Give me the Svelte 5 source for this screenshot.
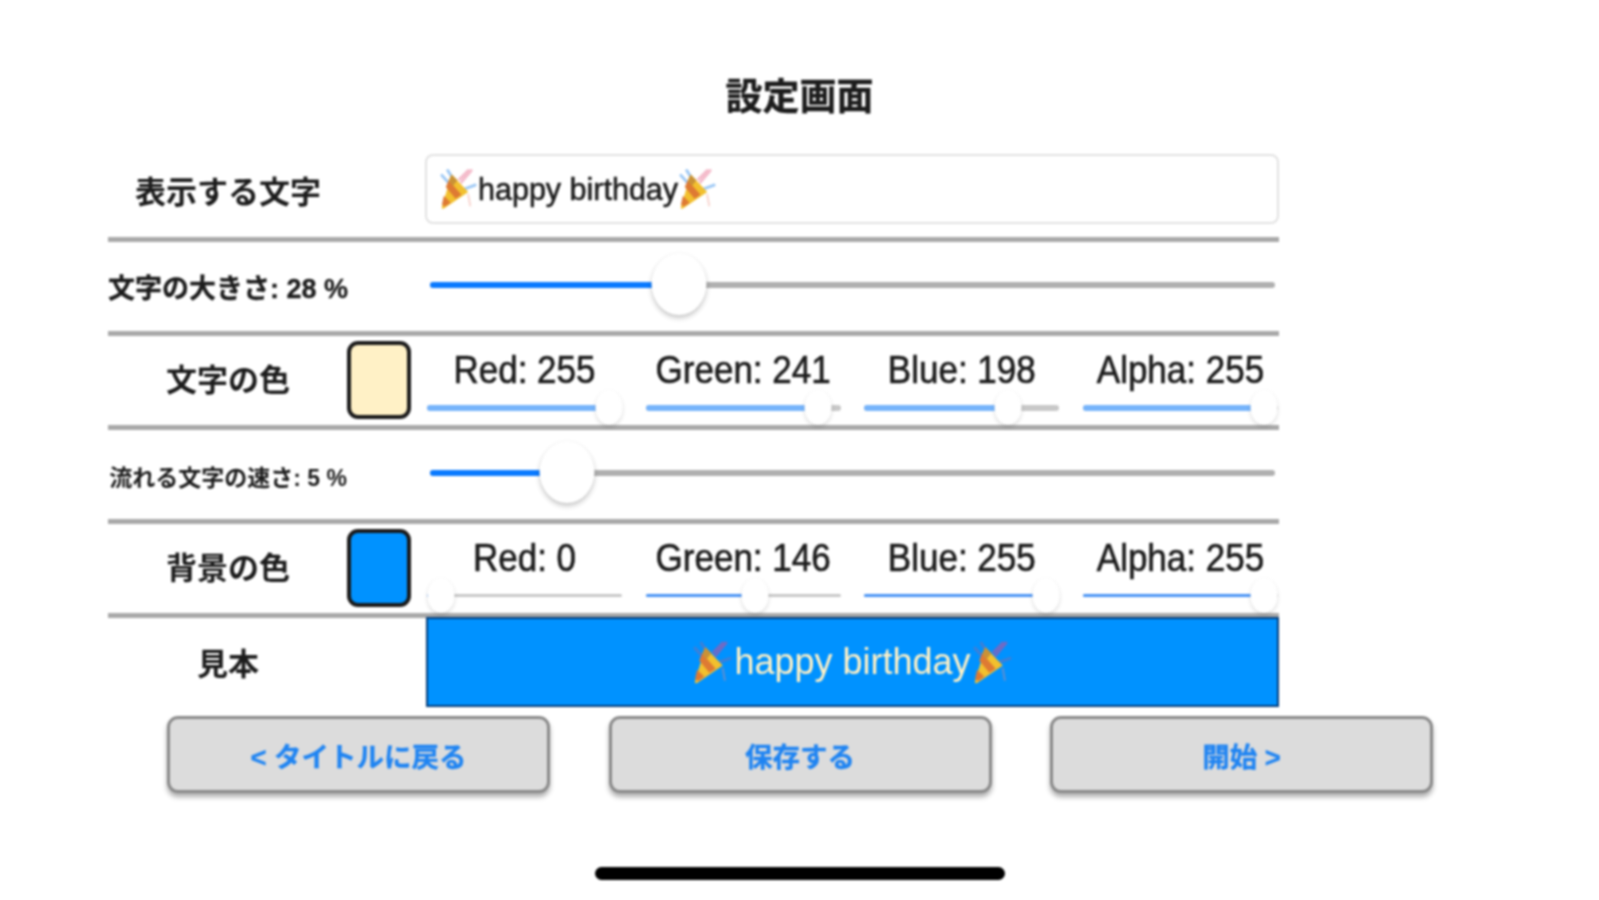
<script>
	let message = $state("happy birthday");
	let textSize = $state(28);
	let speed = $state(5);

	let textColor = $state([
		{ name: "Red", value: 255 },
		{ name: "Green", value: 241 },
		{ name: "Blue", value: 198 },
		{ name: "Alpha", value: 255 }
	]);
	let bgColor = $state([
		{ name: "Red", value: 0 },
		{ name: "Green", value: 146 },
		{ name: "Blue", value: 255 },
		{ name: "Alpha", value: 255 }
	]);

	const toCss = (c) => `rgb(${c[0].value}, ${c[1].value}, ${c[2].value})`;

	// thumb stays inside the track, like the native slider
	function thumbPos(value, max, thumb) {
		return `calc(${thumb / 2}px + (100% - ${thumb}px) * ${value / max})`;
	}
</script>

{#snippet popper()}
	<svg class="popper" viewBox="0 0 40 44" aria-hidden="true">
		<path class="streamer-a" d="M9 3l7 11M3 8l8 9" stroke-width="3" stroke-linecap="round" fill="none" />
		<path class="streamer-b" d="M23 15L33 3M30 3l-9 9" stroke-width="3" stroke-linecap="round" fill="none" />
		<path class="streamer-a" d="M26 22l11-4" stroke-width="3" stroke-linecap="round" />
		<path class="streamer-c" d="M30 28l2 11" stroke-width="2" stroke-linecap="round" />
		<path d="M13 7L30 25 5 42q-3 1-2-2z" fill="#f2c02e" />
		<path d="M10 13l13 15-6 4L7 20zM5 29l7 7-6 4-3-2z" fill="#de7a33" />
		<path d="M13 7l6 6-5 6-4-6z" fill="#c99235" />
	</svg>
{/snippet}

{#snippet slider(value, max, thumb, big)}
	<div class="slider" class:big style="--pos: {thumbPos(value, max, thumb)}">
		<div class="track"></div>
		<div class="fill"></div>
		<div class="thumb"></div>
	</div>
{/snippet}

{#snippet colorRow(label, color, thin)}
	<div class="row" class:thin>
		<span class="label color">{label}</span>
		<div class="swatch" style="background: {toCss(color)}"></div>
		<div class="channels">
			{#each color as ch}
				<div class="channel">
					<span class="channel-name">{ch.name}: {ch.value}</span>
					{@render slider(ch.value, 255, 27, false)}
				</div>
			{/each}
		</div>
	</div>
{/snippet}

<div class="screen">
	<h1>設定画面</h1>

	<div class="form">
		<div class="row first">
			<span class="label">表示する文字</span>
			<div class="input">{@render popper()}<span>{message}</span>{@render popper()}</div>
		</div>
		<div class="row">
			<span class="label small">文字の大きさ: {textSize} %</span>
			{@render slider(textSize, 100, 55, true)}
		</div>
		{@render colorRow("文字の色", textColor, false)}
		<div class="row">
			<span class="label tiny">流れる文字の速さ: {speed} %</span>
			{@render slider(speed, 36, 55, true)}
		</div>
		{@render colorRow("背景の色", bgColor, true)}
		<div class="row sample">
			<span class="label">見本</span>
			<div class="preview" style="background: {toCss(bgColor)}; color: {toCss(textColor)}">
				{@render popper()}<span>{message}</span>{@render popper()}
			</div>
		</div>
	</div>

	<div class="buttons">
		<button>&lt; タイトルに戻る</button>
		<button>保存する</button>
		<button>開始 &gt;</button>
	</div>

	<div class="home-bar"></div>
</div>

<style>
	:global(body) { background: #fff; }

	.screen {
		height: 900px;
		overflow: hidden;
		font-family: "Liberation Sans", "Noto Sans CJK JP", sans-serif;
		color: #1c1c1c;
		filter: blur(1.1px);
	}

	h1 {
		margin: 0;
		padding-top: 72px;
		height: 73px;
		line-height: 52px;
		font-size: 37px;
		font-weight: 700;
		text-align: center;
		-webkit-text-stroke: 0.4px #1c1c1c;
	}

	.form { width: 1171px; margin-left: 108px; }

	.row {
		display: grid;
		grid-template-columns: 240px 77px 1fr;
		align-items: center;
		height: 94px;
		box-sizing: border-box;
		border-bottom: 5px solid #a9a9a9;
	}
	.row.first { height: 97px; }
	.row > .slider { grid-column: 3; margin: -3px 4px 0 5px; }

	.label {
		text-align: center;
		font-size: 31px;
		font-weight: 700;
		white-space: nowrap;
		margin-top: -4px;
	}
	.label.color { margin-top: -7px; }
	.label.small { font-size: 27px; margin-top: 0; -webkit-text-stroke: 0.3px #1c1c1c; }
	.label.tiny { font-size: 23px; margin-top: 2px; }

	.input {
		grid-column: 2 / 4;
		margin-left: 77px;
		height: 70px;
		box-sizing: border-box;
		border: 2px solid #e2e2e2;
		border-radius: 8px;
		padding: 0 12px;
		display: flex;
		align-items: center;
		font-size: 30.5px;
		margin-bottom: 4px;
		-webkit-text-stroke: 0.6px #1c1c1c;
	}

	.popper { width: 39px; height: 44px; flex: none; }
	.streamer-a { stroke: #9cc8f5; }
	.streamer-b { stroke: #f4bccb; }
	.streamer-c { stroke: #f8d5cf; }
	.preview .streamer-a { stroke: #3f7fd6; }
	.preview .streamer-b { stroke: #6f6bc4; }
	.preview .streamer-c { stroke: #5c8ed0; }

	.slider { position: relative; height: 62px; }
	.slider .track,
	.slider .fill {
		position: absolute;
		left: 0;
		top: 50%;
		height: 6px;
		margin-top: -3px;
		background: #b0b0b0;
		border-radius: 3px;
	}
	.slider .track { right: 0; }
	.slider .fill { width: var(--pos); background: #0a7aff; }
	.slider .thumb {
		position: absolute;
		left: var(--pos);
		top: 0;
		width: 27px;
		height: 35px;
		transform: translateX(-50%);
		background: #fff;
		border-radius: 50%;
		box-shadow: 0 2px 4px rgba(0, 0, 0, 0.14);
	}
	.slider.big .thumb {
		width: 55px;
		height: 62px;
		top: -1px;
		box-shadow: 0 3px 5px rgba(0, 0, 0, 0.22), 0 0 1px rgba(0, 0, 0, 0.1);
	}
	.slider:not(.big) { height: 35px; }
	.slider:not(.big) .fill { background: #76b4fb; }
	.slider:not(.big) .track { background: #c8c8c8; }
	.thin .slider .track,
	.thin .slider .fill { height: 3.5px; margin-top: -1.75px; }
	.thin .slider:not(.big) .fill { background: #4a94f5; }

	.swatch {
		width: 64px;
		height: 78px;
		margin-left: -1px;
		margin-top: -2px;
		box-sizing: border-box;
		border: 4px solid #1a1a1a;
		border-radius: 11px;
	}

	.channels {
		display: flex;
		justify-content: space-between;
		padding: 0 1px 0 2px;
		align-self: end;
	}
	.channel { width: 195px; text-align: center; }
	.channel-name {
		display: block;
		height: 44px;
		line-height: 46px;
		font-size: 35px;
		white-space: nowrap;
		transform: scaleY(1.12);
		-webkit-text-stroke: 0.6px #1c1c1c;
	}

	.sample { height: 90px; border-bottom: none; }
	.preview {
		grid-column: 2 / 4;
		margin: -2px 0 0 78px;
		height: 90px;
		box-sizing: border-box;
		border: 2px solid #063f7c;
		display: flex;
		align-items: center;
		justify-content: center;
		gap: 1px;
		font-size: 36px;
	}
	.preview .popper { width: 41px; height: 49px; }

	.buttons {
		display: flex;
		justify-content: space-between;
		margin: 8px 166px 0 167px;
	}
	button {
		width: 383px;
		height: 77px;
		box-sizing: border-box;
		background: #dcdcdc;
		border: 3px solid #8a8a8a;
		border-radius: 11px;
		box-shadow: 0 4px 5px rgba(0, 0, 0, 0.32);
		color: #1f84f2;
		font: 700 27.5px "Liberation Sans", "Noto Sans CJK JP", sans-serif;
		-webkit-text-stroke: 0.3px #1f84f2;
		padding: 0;
	}

	.home-bar {
		width: 410px;
		height: 13px;
		margin: 74px auto 0;
		background: #000;
		border-radius: 7px;
	}
</style>
